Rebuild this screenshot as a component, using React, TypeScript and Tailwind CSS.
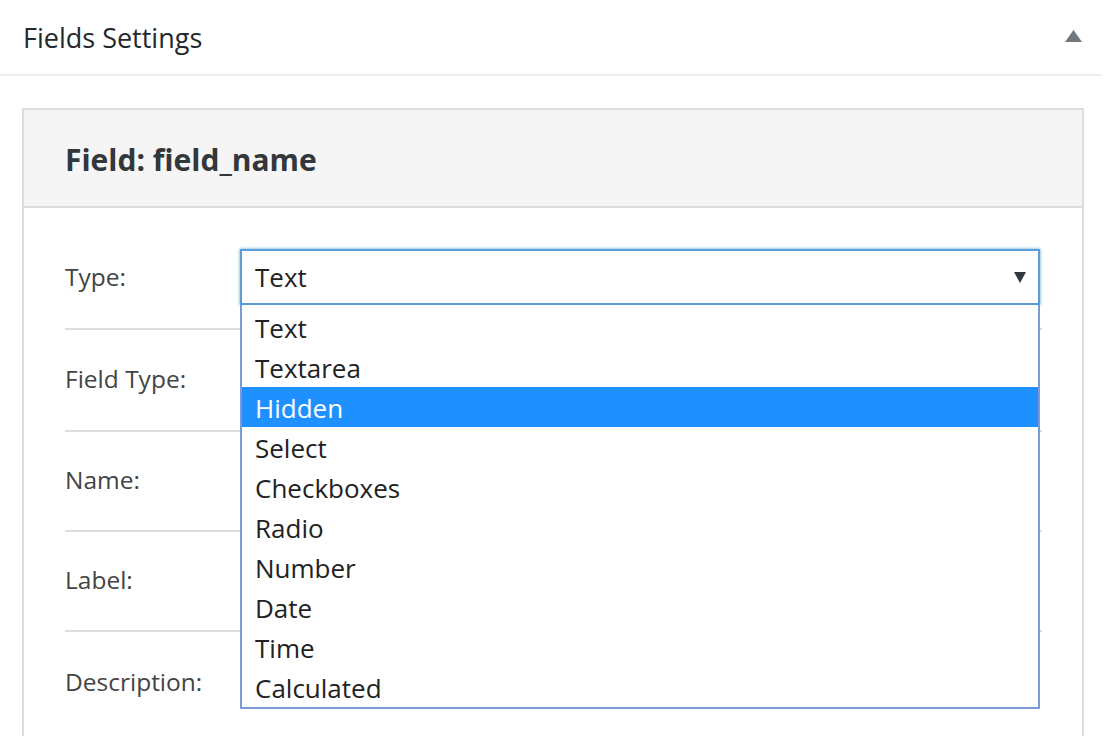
import { useState } from "react";

const OPTIONS = [
  "Text",
  "Textarea",
  "Hidden",
  "Select",
  "Checkboxes",
  "Radio",
  "Number",
  "Date",
  "Time",
  "Calculated",
];

const ROWS = [
  { label: "Field Type:", row: "h-[102px] border-b-2 border-[#dddddd] pb-[2px]" },
  { label: "Name:", row: "h-[100px] border-b-2 border-[#dddddd] pb-[2px]" },
  { label: "Label:", row: "h-[100px] border-b-2 border-[#dddddd] pb-[2px]" },
  { label: "Description:", row: "h-[100px] mb-[40px]" },
];

const App = () => {
  const [hovered, setHovered] = useState("Hidden");

  return (
    <div className="h-[736px] w-full overflow-hidden bg-white font-['Open_Sans',sans-serif]">
      <div className="w-[1102px]">
        {/* Metabox header */}
        <div className="flex h-[76px] items-center justify-between border-b-2 border-[#eeeeee] pl-[23px] pr-[20px] pt-[2px]">
          <h2 className="text-[27px] text-[#23282d]">Fields Settings</h2>
          <svg width="17" height="12" viewBox="0 0 17 12" className="mb-[4px]">
            <path d="M8.5 0 L17 12 L0 12 Z" fill="#72777c" />
          </svg>
        </div>

        <div className="pl-[22px] pr-[18px] pt-[32px]">
          <div className="border-2 border-[#dddddd]">
            {/* Field header */}
            <div className="flex h-[98px] items-center border-b-2 border-[#dddddd] bg-[#f5f5f5] pl-[41px] pt-[2px]">
              <h3 className="text-[30px] font-bold text-[#32373c]">Field: field_name</h3>
            </div>

            <div className="pl-[41px] pr-[40px] pt-[20px]">
              {/* Type row */}
              <div className="flex h-[102px] items-center border-b-2 border-[#dddddd] pb-[2px]">
                <label className="w-[175px] text-[24.5px] text-[#444444]">Type:</label>
                <div className="relative h-[56px] w-[800px]">
                  <div className="flex h-full items-center justify-between border-2 border-[#5b9dd9] pl-[13px] pr-[12px] shadow-[0_0_3px_rgba(30,140,190,0.8)]">
                    <span className="text-[26px] text-[#222222]">Text</span>
                    <svg width="12" height="11" viewBox="0 0 12 11">
                      <path d="M0 0 L12 0 L6 11 Z" fill="#32373c" />
                    </svg>
                  </div>

                  {/* Open dropdown list */}
                  <ul className="absolute left-0 top-full z-10 w-[800px] border-2 border-t-0 border-[#7b9bd6] bg-white pt-[2px]">
                    {OPTIONS.map((opt) => (
                      <li
                        key={opt}
                        onMouseEnter={() => setHovered(opt)}
                        className={
                          opt === hovered
                            ? "h-[40px] bg-[#1e90ff] pl-[13px] pt-[1px] text-[26px] leading-[40px] text-white"
                            : "h-[40px] pl-[13px] pt-[1px] text-[26px] leading-[40px] text-[#222222]"
                        }
                      >
                        {opt}
                      </li>
                    ))}
                  </ul>
                </div>
              </div>

              {ROWS.map((r) => (
                <div key={r.label} className={"flex items-center " + r.row}>
                  <label className="w-[175px] text-[24.5px] text-[#444444]">{r.label}</label>
                  <div className="h-[54px] w-[800px] border-2 border-[#dddddd]" />
                </div>
              ))}
            </div>
          </div>
        </div>
      </div>
    </div>
  );
};

export default App;
